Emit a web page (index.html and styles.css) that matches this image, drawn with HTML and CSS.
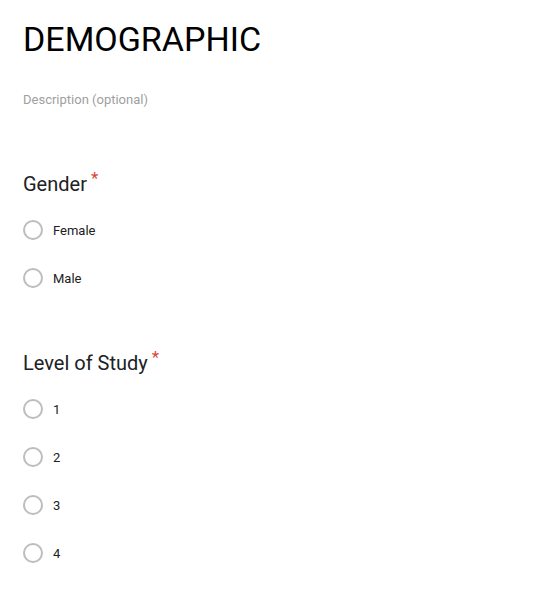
FILE: index.html
```html
<!DOCTYPE html>
<html>
<head>
<meta charset="utf-8">
<link rel="stylesheet" href="styles.css">
</head>
<body>
<div class="form">
  <h1 class="title">DEMOGRAPHIC</h1>
  <div class="desc">Description (optional)</div>

  <section class="question q-gender">
    <div class="q-title">Gender<span class="req">*</span></div>
    <div class="options">
      <label class="option"><span class="radio"></span><span class="opt-label">Female</span></label>
      <label class="option"><span class="radio"></span><span class="opt-label">Male</span></label>
    </div>
  </section>

  <section class="question q-level">
    <div class="q-title">Level of Study<span class="req">*</span></div>
    <div class="options">
      <label class="option"><span class="radio"></span><span class="opt-label">1</span></label>
      <label class="option"><span class="radio"></span><span class="opt-label">2</span></label>
      <label class="option"><span class="radio"></span><span class="opt-label">3</span></label>
      <label class="option"><span class="radio"></span><span class="opt-label">4</span></label>
    </div>
  </section>
</div>
</body>
</html>
```

FILE: styles.css
```css
html, body {
  margin: 0;
  padding: 0;
  background: #ffffff;
}
body {
  font-family: Roboto, "Liberation Sans", Arial, sans-serif;
  color: #202124;
}
.form {
  padding: 18px 0 0 23px;
}
.title {
  margin: 0;
  font-size: 34px;
  font-weight: 400;
  line-height: 42px;
  color: #000000;
}
.desc {
  margin-top: 31px;
  font-size: 13px;
  line-height: 17px;
  color: #a0a0a0;
}
.question {
  margin-top: 0;
}
.q-gender {
  padding-top: 64px;
}
.q-level {
  padding-top: 63px;
}
.q-title {
  font-size: 20px;
  line-height: 24px;
  color: #202124;
  display: flex;
  align-items: flex-start;
}
.req {
  color: #db4437;
  font-size: 17px;
  line-height: 17px;
  margin-left: 4px;
  margin-top: -2px;
}
.options {
  display: flex;
  flex-direction: column;
  gap: 28px;
  margin-top: 24px;
}
.option {
  display: flex;
  align-items: center;
  height: 20px;
}
.radio {
  box-sizing: border-box;
  width: 20px;
  height: 20px;
  border: 2px solid #bdbdbd;
  border-radius: 50%;
  flex: none;
}
.opt-label {
  margin-left: 10px;
  font-size: 13px;
  color: #202124;
}
```
